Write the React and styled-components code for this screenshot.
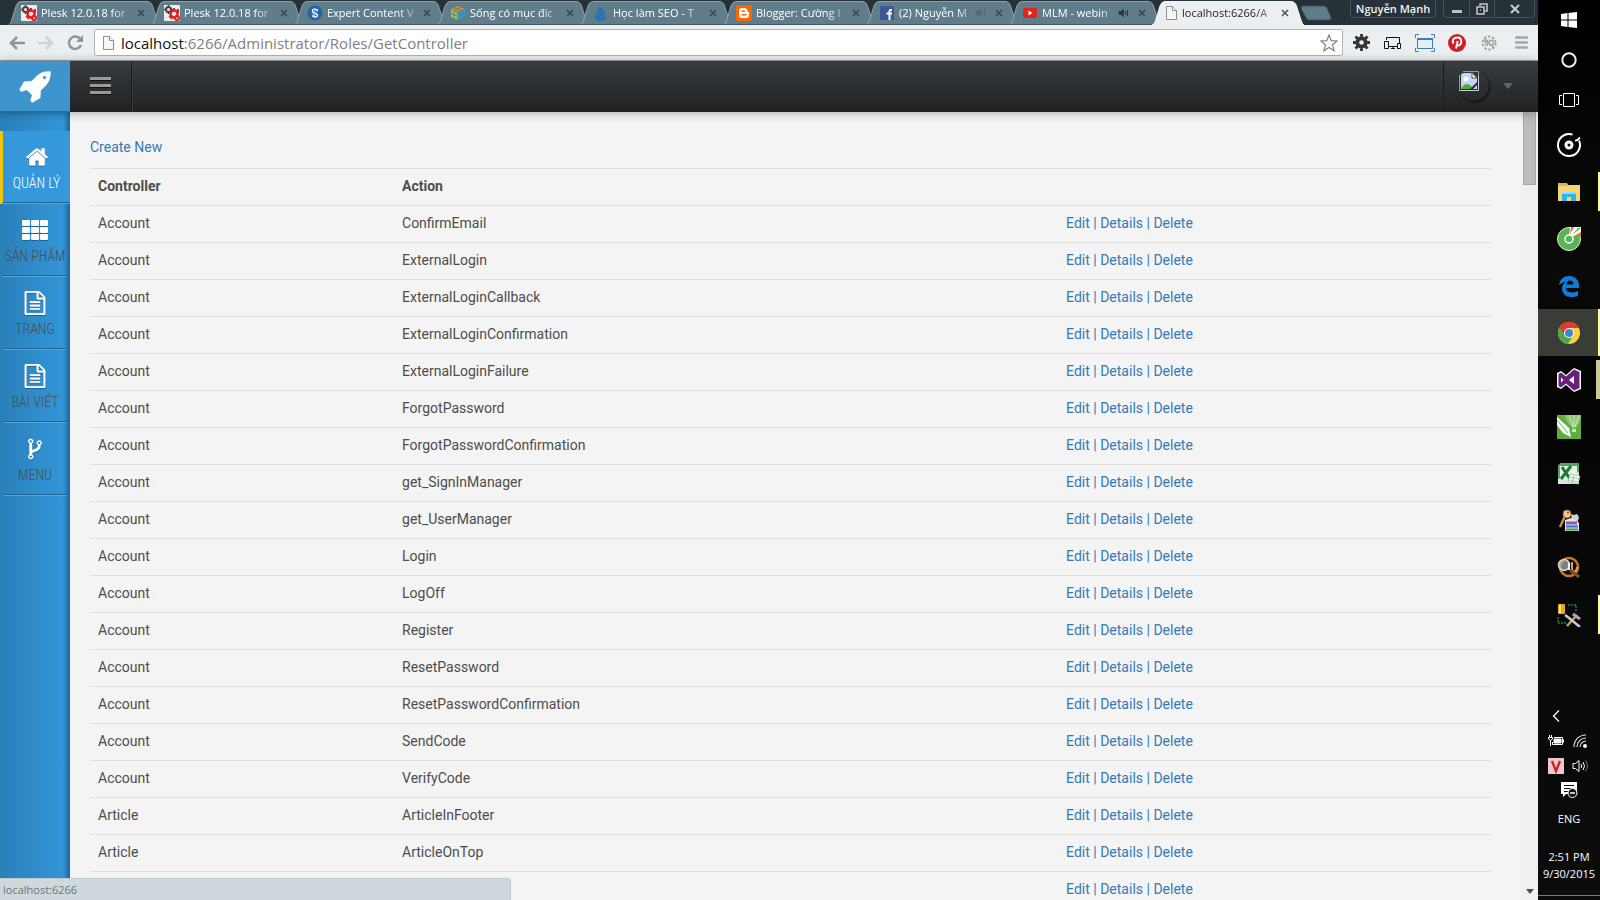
import React from 'react';
import styled, { createGlobalStyle, css } from 'styled-components';

const colors = {
    frame: '#263238',
    tab: '#607d8b',
    toolbar: '#eceff1',
    link: '#337ab7',
    text: '#4d4d4d',
    line: '#dddddd',
    page: '#f4f4f4',
};

const GlobalStyle = createGlobalStyle`
    * { box-sizing: border-box; }
    body {
        margin: 0;
        overflow: hidden;
        font-family: Roboto, "Liberation Sans", sans-serif;
        font-size: 14px;
        line-height: 20px;
        color: ${colors.text};
    }
    button {
        padding: 0;
        border: 0;
        background: none;
        font: inherit;
        color: inherit;
    }
    a { color: ${colors.link}; text-decoration: none; }
    ul { list-style: none; margin: 0; padding: 0; }
    svg { display: block; flex: none; }
`;

const uiFont = css`font-family: "Open Sans", "Noto Sans", sans-serif;`;

const Desktop = styled.div`
    display: flex;
    height: 100vh;
    background: #000;
`;

const Browser = styled.div`
    position: relative;
    flex: 1;
    min-width: 0;
    display: flex;
    flex-direction: column;
`;

/* ---- tab strip ---- */

const TabStrip = styled.div`
    ${uiFont}
    display: flex;
    height: 25px;
    flex: none;
    padding: 0 3px 0 8px;
    background: ${colors.frame};
    font-size: 11px;
    line-height: 24px;
`;

const Tabs = styled.ul`
    display: flex;
`;

const Tab = styled.li`
    position: relative;
    display: flex;
    align-items: center;
    width: 143px;
    height: 25px;
    padding: 1px 2px 0 13px;
    gap: 4px;
    z-index: ${p => (p.$active ? 2 : 1)};
    color: ${p => (p.$active ? '#222' : '#fff')};
`;

const TabShape = styled.svg`
    position: absolute;
    left: 0;
    top: 0;
    z-index: -1;
`;

const TabTitle = styled.button`
    flex: 1;
    min-width: 0;
    white-space: nowrap;
    text-align: left;
    mask-image: linear-gradient(90deg, #000 80%, rgba(0, 0, 0, 0.3) 100%);
`;

const TabClose = styled.button`
    display: flex;
    justify-content: center;
    width: 16px;
    color: ${p => (p.$active ? '#555' : '#39474e')};
`;

const NewTab = styled.button`
    align-self: center;
    margin-left: 5px;
`;

const WindowControls = styled.div`
    display: flex;
    gap: 7px;
    margin-left: auto;
    color: #cfd6d9;
`;

const Profile = styled.button`
    width: 86px;
    height: 18px;
    border: 1px solid #455259;
    border-top: 0;
    border-radius: 0 0 4px 4px;
    line-height: 16px;
    font-weight: 600;
    color: #f2f2f2;
    white-space: nowrap;
`;

const ControlGroup = styled.div`
    display: flex;
    height: 18px;
    border: 1px solid #455259;
    border-top: 0;
    border-radius: 0 0 4px 4px;
`;

const Control = styled.button`
    display: flex;
    align-items: center;
    justify-content: center;
    width: ${p => (p.$wide ? 40 : 25)}px;

    & + & { border-left: 1px solid #455259; }
`;

/* ---- address bar ---- */

const Toolbar = styled.div`
    display: flex;
    align-items: center;
    height: 36px;
    flex: none;
    padding: 0 7px;
    background: ${colors.toolbar};
    border-bottom: 1px solid #9b9d9f;
`;

const NavButtons = styled.div`
    display: flex;
    gap: 9px;
    margin-right: 9px;
`;

const AddressBox = styled.label`
    flex: 1;
    display: flex;
    align-items: center;
    height: 27px;
    padding: 0 4px 0 7px;
    gap: 6px;
    background: #fff;
    border: 1px solid #b0b4b6;
    border-radius: 2px;
`;

const Url = styled.div`
    ${uiFont}
    position: relative;
    flex: 1;
    height: 24px;
    font-size: 15px;
    line-height: 24px;
    color: #111;
`;

const UrlInput = styled.input`
    width: 100%;
    height: 24px;
    padding: 0;
    border: 0;
    outline: 0;
    background: none;
    font: inherit;
    color: #808080;
`;

/* the host part is painted darker than the rest of the address */
const UrlHost = styled.span`
    position: absolute;
    left: 0;
    top: 0;
    background: #fff;
    pointer-events: none;
`;

const Extensions = styled.div`
    display: flex;
    align-items: center;
    gap: 12px;
    margin-left: 8px;
`;

const ToolButton = styled.button`
    display: flex;
    align-items: center;
    justify-content: center;
    width: 20px;
    height: 20px;
`;

/* ---- web page ---- */

const Page = styled.div`
    flex: 1;
    min-height: 0;
    display: flex;
    flex-direction: column;
    background: ${colors.page};
`;

const Header = styled.header`
    position: relative;
    z-index: 3;
    display: flex;
    flex: none;
    height: 51px;
    background: linear-gradient(#393d40, #202122);
    box-shadow: 0 1px 10px rgba(0, 0, 0, 0.3);
`;

const Logo = styled.a`
    display: flex;
    align-items: center;
    justify-content: center;
    width: 70px;
    padding-left: 2px;
    background: #3e95cd;
    border-bottom: 1px solid #2a6b96;
    color: #fff;
`;

const MenuToggle = styled.button`
    display: flex;
    align-items: center;
    justify-content: center;
    width: 62px;
    padding-bottom: 2px;
    border-right: 1px solid #17191a;
    box-shadow: 1px 0 0 #3a3d3f;
`;

const UserMenu = styled.button`
    display: flex;
    align-items: center;
    gap: 14px;
    width: 95px;
    margin-left: auto;
    padding: 0 0 2px 15px;
    border-left: 1px solid #191b1c;
`;

const Avatar = styled.span`
    width: 30px;
    height: 30px;
    border-radius: 50%;
    box-shadow: 1px 1px 2px #0c0d0e;
`;

const Body = styled.div`
    flex: 1;
    min-height: 0;
    display: flex;
`;

const Sidebar = styled.nav`
    width: 70px;
    flex: none;
    padding-top: 19px;
    background: linear-gradient(90deg, #2980b9, #3498db);
    box-shadow: inset -5px 0 5px -2px rgba(0, 40, 80, 0.5);
`;

const MenuItem = styled.a`
    display: flex;
    flex-direction: column;
    align-items: center;
    gap: 2px;
    height: 73px;
    margin: ${p => (p.$active ? '0' : '0 3px')};
    padding-top: 14px;
    border-bottom: 1px solid #5ba6d6;
    box-shadow: inset 0 -1px 0 #1e6391;
    font-family: "Roboto Condensed", Roboto, sans-serif;
    font-weight: 300;
    font-size: 14px;
    line-height: 24px;
    white-space: nowrap;
    color: #4d4d4d;

    svg { color: #fff; filter: drop-shadow(0 1px 0 #1e6391); }

    ${p => p.$active && css`
        background: #3498db;
        border-left: 3px solid #f1c40f;
        color: #fff;
    `}
`;

const Content = styled.main`
    flex: 1;
    min-width: 0;
    overflow: hidden;
    padding: 25px 30px 0 20px;
`;

const Intro = styled.p`
    margin: 0 0 11px;
`;

const Table = styled.table`
    width: 100%;
    border-collapse: collapse;
    table-layout: fixed;

    th, td {
        height: 37px;
        padding: 7px 8px 8px;
        border-top: 1px solid ${colors.line};
        text-align: left;
        vertical-align: top;
        line-height: 20px;
    }
    th:nth-child(1) { width: 21.7%; }
    th:nth-child(2) { width: 47.4%; }
`;

const Actions = styled.td`
    color: ${colors.link};
`;

const ScrollTrack = styled.div`
    width: 17px;
    flex: none;
    display: flex;
    flex-direction: column;
    justify-content: space-between;
    align-items: center;
    padding-bottom: 6px;
    background: #f0f0f0;
`;

const ScrollThumb = styled.div`
    width: 13px;
    height: 73px;
    background: #bcbcbc;
    border: 1px solid #a8a8a8;
    border-top: 0;
`;

const StatusBubble = styled.div`
    ${uiFont}
    position: absolute;
    left: 0;
    bottom: 0;
    z-index: 5;
    width: 511px;
    height: 22px;
    padding-left: 3px;
    background: #cfd8dc;
    border-top: 1px solid #c2cacd;
    border-right: 1px solid #c2cacd;
    border-radius: 0 4px 0 0;
    font-size: 11px;
    line-height: 22px;
    color: #6d7478;
`;

/* ---- taskbar ---- */

const Taskbar = styled.aside`
    ${uiFont}
    display: flex;
    flex-direction: column;
    width: 62px;
    flex: none;
    background: linear-gradient(#000, #0a0a08 30%, #040404 40%, #0c0c0c);
    color: #fff;
    font-size: 11px;
    line-height: 17px;
`;

const StartButton = styled.button`
    display: flex;
    align-items: center;
    justify-content: center;
    height: 40px;
`;

const Pinned = styled.div`
    display: flex;
    flex-direction: column;
    margin-top: 1px;
`;

const TaskButton = styled.button`
    position: relative;
    display: flex;
    align-items: center;
    justify-content: center;
    height: 47px;
    background: ${p => (p.$current ? '#3b3b37' : 'none')};

    &::after {
        content: '';
        display: ${p => (p.$open ? 'block' : 'none')};
        position: absolute;
        right: 0;
        top: ${p => (p.$current ? 0 : 4)}px;
        bottom: ${p => (p.$current ? 0 : 4)}px;
        width: ${p => (p.$stacked ? 4 : 2)}px;
        background: ${p => (p.$stacked ? '#c9cb92' : '#fbfb9e')};
    }
`;

const Tray = styled.div`
    display: flex;
    flex-direction: column;
    align-items: center;
    margin-top: auto;
    border-bottom: 1px solid #7a7a7a;
    margin-bottom: 4px;
`;

const TrayGrid = styled.div`
    display: grid;
    grid-template-columns: 24px 24px;
    grid-auto-rows: 25px;
    place-items: center;
    width: 50px;
`;

const TrayButton = styled.button`
    display: flex;
    align-items: center;
    justify-content: center;
    height: ${p => p.$height || 24}px;
`;

const Clock = styled.div`
    margin: 14px 0 13px;
    text-align: center;
    white-space: nowrap;
`;

/* ---- icons ---- */

const glyphs = {
    home: 'M1472 992v480q0 26-19 45t-45 19h-384v-384h-256v384h-384q-26 0-45-19t-19-45v-480q0-1 .5-3t.5-3l575-474 575 474q1 2 1 6zm223-69l-62 74q-8 9-21 11h-3q-13 0-21-7l-692-577-692 577q-12 8-24 7-13-2-21-11l-62-74q-8-10-7-23.5t11-21.5l719-599q32-26 76-26t76 26l244 204v-195q0-14 9-23t23-9h192q14 0 23 9t9 23v408l219 182q10 8 11 21.5t-7 23.5z',
    file: 'M1596 380q28 28 48 76t20 88v1152q0 40-28 68t-68 28h-1344q-40 0-68-28t-28-68v-1600q0-40 28-68t68-28h896q40 0 88 20t76 48zm-444-244v376h376q-10-29-22-41l-313-313q-12-12-41-22zm384 1528v-1024h-416q-40 0-68-28t-28-68v-416h-768v1536h1280zm-1024-864q0-14 9-23t23-9h704q14 0 23 9t9 23v64q0 14-9 23t-23 9h-704q-14 0-23-9t-9-23v-64zm736 224q14 0 23 9t9 23v64q0 14-9 23t-23 9h-704q-14 0-23-9t-9-23v-64q0-14 9-23t23-9h704zm0 256q14 0 23 9t9 23v64q0 14-9 23t-23 9h-704q-14 0-23-9t-9-23v-64q0-14 9-23t23-9h704z',
    fork: 'M672 1472q0-40-28-68t-68-28-68 28-28 68 28 68 68 28 68-28 28-68zm0-1152q0-40-28-68t-68-28-68 28-28 68 28 68 68 28 68-28 28-68zm640 128q0-40-28-68t-68-28-68 28-28 68 28 68 68 28 68-28 28-68zm96 0q0 52-26 96.5t-70 69.5q-2 287-226 414-67 38-203 81-128 40-169.5 71t-41.5 100v26q44 25 70 69.5t26 96.5q0 80-56 136t-136 56-136-56-56-136q0-52 26-96.5t70-69.5v-820q-44-25-70-69.5t-26-96.5q0-80 56-136t136-56 136 56 56 136q0 52-26 96.5t-70 69.5v497q54-26 154-57 55-17 87.5-29.5t70.5-31 59-39.5 40.5-51 28-69.5 8.5-91.5q-44-25-70-69.5t-26-96.5q0-80 56-136t136-56 136 56 56 136z',
    rocket: 'M1440 448q0-40-28-68t-68-28-68 28-28 68 28 68 68 28 68-28 28-68zm224-288q0 249-75.5 430.5t-253.5 360.5q-81 80-195 176l-20 379q-2 16-16 26l-384 224q-7 4-16 4-12 0-23-9l-64-64q-13-14-8-32l85-276-281-281-276 85q-3 1-9 1-14 0-23-9l-64-64q-17-19-5-39l224-384q10-14 26-16l379-20q96-114 176-195 188-187 358-258t431-71q14 0 24 9.5t10 22.5z',
};

const Glyph = ({ name, size = 24 }) => (
    <svg width={size} height={size} viewBox="0 0 1792 1792" fill="currentColor" stroke="currentColor" strokeWidth="24">
        <path d={glyphs[name]} />
    </svg>
);

const GridIcon = () => (
    <svg width="26" height="24" viewBox="0 0 26 24" fill="currentColor">
        {[2, 9, 16].map(y => [0, 9, 18].map(x => (
            <rect key={`${x}-${y}`} x={x} y={y} width="8" height="6" rx="1" />
        )))}
    </svg>
);

const PageIcon = () => (
    <svg width="13" height="16" viewBox="0 0 13 16" fill="#f6f6f6" stroke="#8e8e8e">
        <path d="M1.5 1.5h6l4 4v9h-10z" />
        <path d="M7.5 1.5v4h4" />
    </svg>
);

const CloseIcon = () => (
    <svg width="8" height="8" viewBox="0 0 8 8" stroke="currentColor" strokeWidth="1.6">
        <path d="M1 1l6 6M7 1L1 7" />
    </svg>
);

const SpeakerIcon = ({ on }) => (
    <svg width="12" height="12" viewBox="0 0 12 12" fill={on ? '#333' : '#4f6975'} stroke={on ? '#333' : '#4f6975'}>
        <path d="M1 4.500h2l2.500-2.500v8L3 7.500H1z" strokeWidth=".6" />
        <path d="M7.500 4v4M9.500 3v6" fill="none" />
    </svg>
);

const Favicon = ({ kind }) => {
    if (kind === 'page') return <PageIcon />;
    return (
        <svg width="16" height="16" viewBox="0 0 16 16">
            {kind === 'plesk' && <>
                <rect width="16" height="16" rx="1" fill="#ececec" />
                <circle cx="4.500" cy="4.500" r="2.500" fill="none" stroke="#444" strokeWidth="2" />
                <path d="M4.500 0v2M4.500 7v2M0 4.500h2M7 4.500h2" stroke="#444" strokeWidth="1.500" />
                <circle cx="10" cy="9" r="3.500" fill="none" stroke="#e01f27" strokeWidth="2.500" />
                <path d="M10 3v3M5 7l2 1M5 12l3-1M14 4v4M7 14l2-3" stroke="#e01f27" strokeWidth="2" />
                <circle cx="13" cy="13" r="2" fill="none" stroke="#e01f27" strokeWidth="2" />
            </>}
            {kind === 'expert' && <>
                <circle cx="8" cy="8" r="7.500" fill="#2464a4" />
                <path d="M11 5.500C9 3 5 4 5.500 6.500S11 8 10.500 10.500 6 12 5 10.500" fill="none" stroke="#fff" strokeWidth="1.300" />
                <path d="M10.500 6.500C9 5 7 5.500 8 7M5.500 9.500C7 11 9 10.500 8 9" fill="none" stroke="#fff" strokeWidth=".8" />
            </>}
            {kind === 'cube' && <>
                <path d="M1 4.500l6-3.500 7.500 2.500L8 7z" fill="#f08a24" />
                <path d="M1 5l6.500 3v7L1 12z" fill="#a6c93a" />
                <path d="M8.500 8L15 4.500V11l-6.500 4z" fill="#2a9fd8" />
                <path d="M4 3l7 2.500M1 8.500l6.500 3M8.500 11.500L15 8M4 6.500v7M12 6v7M11 2L4 6" stroke="#607d8b" />
            </>}
            {kind === 'drop' && <>
                <path d="M6.500 0C8 3 13 7 13 11c0 3-2 5-5 5s-6-1-6-4.500C2 8 7 5 6.500 0z" fill="#1c75bc" />
                <path d="M3 10c3-.5 5-2 6-4M4 13c3-.3 6-1 8-4" fill="none" stroke="#607d8b" />
            </>}
            {kind === 'blogger' && <>
                <rect width="16" height="16" rx="3" fill="#ff6600" />
                <path d="M6 3h2.500C10.500 3 11.500 4.500 11.500 6.500c.2.700 1.500.2 1.500 1v2.500c0 2-1 3-3 3H6c-2 0-3-1-3-3V6c0-2 1-3 3-3z" fill="#fff" />
                <path d="M6 6.300h2.500M6 9.800h4" stroke="#ff6600" strokeWidth="1.400" strokeLinecap="round" />
            </>}
            {kind === 'facebook' && <>
                <rect x="1" y="1" width="14" height="14" fill="#3b5998" />
                <path d="M13 5h-1.500q-1 0-1 1v9M7.500 8.500H13" fill="none" stroke="#fff" strokeWidth="2" />
            </>}
            {kind === 'youtube' && <>
                <rect x="1" y="3" width="14" height="10" rx="2.500" fill="#e62117" />
                <path d="M6.500 5.500v5l4-2.500z" fill="#fff" />
            </>}
        </svg>
    );
};

const TabOutline = ({ active }) => (
    <TabShape width="152" height="25" viewBox="0 0 152 25">
        <path
            d="M0 25C3 24 3 22 4 19L8 6Q9.500 1.500 13 1.500H139Q143 1.500 144.500 6L149 20Q150 24 152 25z"
            fill={active ? colors.toolbar : colors.tab}
        />
        <path
            d="M0 25C3 24 3 22 4 19L8 6Q9.500 1.500 13 1.500H139Q143 1.500 144.500 6L149 20Q150 24 152 25"
            fill="none"
            stroke={active ? '#f4f6f7' : '#8fa3ad'}
        />
        {!active && <path d="M0 24.500h152" stroke="#45555e" />}
    </TabShape>
);

const taskIcons = {
    groove: <>
        <path d="M15.500 1.600A11 11 0 1 0 22 7.500" fill="none" stroke="#fff" strokeWidth="2" />
        <circle cx="12" cy="12" r="3" fill="none" stroke="#fff" strokeWidth="3" />
        <path d="M18 7.500c2 .5 3-1 5-3" fill="none" stroke="#fff" strokeWidth="2" />
    </>,
    folder: <>
        <path d="M1 3h9l1 2h12v16H1z" fill="#f7d672" />
        <path d="M1 3h9v3H1z" fill="#e9b73c" />
        <path d="M3 4h4" stroke="#59c3ea" />
        <path d="M5 21v-8h14v8h-5v-4h-4v4z" fill="#2fb4ea" />
        <path d="M5 13h14" stroke="#8fdcf5" strokeWidth="2" />
    </>,
    coccoc: <>
        <circle cx="12" cy="12" r="11.500" fill="#5cb353" stroke="#d8efd5" />
        <path d="M12 10L13 0H24V8z" fill="#fff" />
        <path d="M13 7l1-7h3zM17 9l7-4v4z" fill="#f26a21" />
        <path d="M15 8l6-7h3z" fill="#5cb353" />
        <circle cx="12" cy="12" r="4" fill="#5cb353" stroke="#fff" strokeWidth="1.500" />
    </>,
    edge: <path d="M2 11C3 5 7 2 12 2c6 0 10 4 10 9v3H9c0 3 3 4.500 6 4.500 2 0 4-.5 6-1.500v4.500c-2 1-4 1.500-7 1.500-6 0-9-4-9-8 0-3.500 1.500-6 4-7.500-3 .5-5 2-7 3.500zM9.500 10.500h7C16.500 8 15 6.500 13 6.500s-3.300 1.500-3.500 4z" fill="#0f7bdc" />,
    chrome: <>
        <circle cx="12" cy="12" r="11" fill="#f9d23c" />
        <path d="M12 12L2.500 6.500A11 11 0 0 0 11 23l5-9z" fill="#4aa847" />
        <path d="M12 7h10A11 11 0 0 0 2.500 6.500L7.500 14z" fill="#dd3b30" />
        <circle cx="12" cy="12" r="5" fill="#fff" />
        <circle cx="12" cy="12" r="4" fill="#3f83d8" />
    </>,
    studio: <>
        <path d="M17 0l7 3v18l-7 3-8-7-5 4-4-2V5l4-2 5 4z" fill="#fff" />
        <path d="M17 1.500l5.500 2.500v16L17 22.500 9 15.500 4 19.500 1.500 18V6L4 4.500l5 4zM17 8l-5 4 5 4zM4 9.500v5L6.500 12z" fill="#68217a" fillRule="evenodd" />
    </>,
    corel: <>
        <rect width="24" height="24" fill="#5fad41" />
        <path d="M8 0c0 6 5 9 7 13h4c2-4 5-6 5-13z" fill="#8bc777" />
        <path d="M12 0l4 12M17 0v12M22 0l-4 12" stroke="#c9e5be" />
        <path d="M15 14h4v3h-4z" fill="#c9e5be" />
        <path d="M0 2l12 11 2 9-8-4-6-8z" fill="#fff" />
        <path d="M0 5l11 13" stroke="#5fad41" />
    </>,
    excel: <>
        <path d="M4 1h18v21H1V4z" fill="#d9ead8" />
        <path d="M1 4l4-3h17v9L1 17z" fill="#5ba360" />
        <path d="M3 4h17v13H3z" fill="#e7f3e6" />
        <path d="M5 5l8 12M14 4L4 17" stroke="#1f7a38" strokeWidth="3" />
        <path d="M13 12l10 2-2 8-10-2z" fill="#f7fbf7" stroke="#8fbc91" strokeWidth=".7" />
        <path d="M13 15l9 2M12 18l9 2M17 13l-2 8" stroke="#8fbc91" strokeWidth=".8" />
    </>,
    key: <>
        <path d="M8 11l9-3 5 6v8H8z" fill="#dfe2f5" />
        <path d="M14 5l3 1 3-1 2 3-1 4-6-2z" fill="#cfd3dc" />
        <path d="M9 14h11" stroke="#a0559d" strokeWidth="3" />
        <path d="M9 17.500h12" stroke="#2b6fd0" strokeWidth="2" />
        <path d="M9 20.500h12" stroke="#44a037" strokeWidth="2" />
        <path d="M8 7L3 18" stroke="#c7913f" strokeWidth="2.500" />
        <circle cx="10" cy="5" r="4" fill="#edc78c" stroke="#a96f2a" />
        <circle cx="11" cy="3.500" r="1" fill="#7b4c18" />
    </>,
    search: <>
        <circle cx="12" cy="11" r="9" fill="none" stroke="#c9762a" strokeWidth="2.500" />
        <path d="M15 6v8c2 3 5 1 5-3" fill="none" stroke="#e0a050" strokeWidth="2" />
        <circle cx="7" cy="9" r="5.500" fill="#b8b5b0" fillOpacity=".7" stroke="#d6d3ce" strokeWidth="1.500" />
        <path d="M12 7v7" stroke="#f0eee8" strokeWidth="2" />
        <path d="M13 14l9 7" stroke="#7d5230" strokeWidth="3" />
    </>,
    tools: <>
        <rect x="1" y="1" width="7" height="10" rx="1" fill="#e6a820" />
        <path d="M3 2v8" stroke="#ffe38a" strokeWidth="2" />
        <path d="M11 2h8v7M1 14v6h8" fill="none" stroke="#2f7d32" strokeWidth="1.500" strokeDasharray="2 1" />
        <path d="M10 23L20 12" stroke="#d79b3c" strokeWidth="2.500" />
        <path d="M8 12l4 3 11 9" fill="none" stroke="#c4ccd6" strokeWidth="2.500" />
        <path d="M16 11l4 3 3 2" fill="none" stroke="#9fabb8" strokeWidth="3" />
    </>,
};

/* ---- data ---- */

const tabs = [
    { title: 'Plesk 12.0.18 for', icon: 'plesk' },
    { title: 'Plesk 12.0.18 for', icon: 'plesk' },
    { title: 'Expert Content V', icon: 'expert' },
    { title: 'Sống có mục đíc', icon: 'cube' },
    { title: 'Học làm SEO - T', icon: 'drop' },
    { title: 'Blogger: Cường I', icon: 'blogger' },
    { title: '(2) Nguyễn M', icon: 'facebook', audio: 'off' },
    { title: 'MLM - webin', icon: 'youtube', audio: 'on' },
    { title: 'localhost:6266/A', icon: 'page', active: true },
];

const menu = [
    { label: 'QUẢN LÝ', icon: <Glyph name="home" />, active: true },
    { label: 'SẢN PHẨM', icon: <GridIcon /> },
    { label: 'TRANG', icon: <Glyph name="file" /> },
    { label: 'BÀI VIẾT', icon: <Glyph name="file" /> },
    { label: 'MENU', icon: <Glyph name="fork" /> },
];

const rows = [
    ['Account', 'ConfirmEmail'],
    ['Account', 'ExternalLogin'],
    ['Account', 'ExternalLoginCallback'],
    ['Account', 'ExternalLoginConfirmation'],
    ['Account', 'ExternalLoginFailure'],
    ['Account', 'ForgotPassword'],
    ['Account', 'ForgotPasswordConfirmation'],
    ['Account', 'get_SignInManager'],
    ['Account', 'get_UserManager'],
    ['Account', 'Login'],
    ['Account', 'LogOff'],
    ['Account', 'Register'],
    ['Account', 'ResetPassword'],
    ['Account', 'ResetPasswordConfirmation'],
    ['Account', 'SendCode'],
    ['Account', 'VerifyCode'],
    ['Article', 'ArticleInFooter'],
    ['Article', 'ArticleOnTop'],
    ['', ''],
];

const tasks = [
    { icon: 'groove' },
    { icon: 'folder', open: true },
    { icon: 'coccoc' },
    { icon: 'edge' },
    { icon: 'chrome', open: true, current: true },
    { icon: 'studio', open: true, stacked: true },
    { icon: 'corel' },
    { icon: 'excel' },
    { icon: 'key' },
    { icon: 'search' },
    { icon: 'tools', open: true },
];

/* ---- sections ---- */

const TitleBar = () => (
    <TabStrip>
        <Tabs>
            {tabs.map((tab, i) => (
                <Tab key={i} $active={tab.active}>
                    <TabOutline active={tab.active} />
                    <Favicon kind={tab.icon} />
                    <TabTitle>{tab.title}</TabTitle>
                    {tab.audio && <SpeakerIcon on={tab.audio === 'on'} />}
                    <TabClose $active={tab.active} aria-label="Close tab"><CloseIcon /></TabClose>
                </Tab>
            ))}
        </Tabs>
        <NewTab aria-label="New tab">
            <svg width="32" height="16" viewBox="0 0 32 16">
                <path d="M3 1h21q2 0 3 2l4 9q1 3-2 3H9q-2 0-3-2L1 3q0-2 2-2z" fill={colors.tab} stroke="#3c4c54" />
            </svg>
        </NewTab>
        <WindowControls>
            <Profile>Nguyễn Mạnh</Profile>
            <ControlGroup>
                <Control aria-label="Minimize">
                    <svg width="12" height="12" viewBox="0 0 12 12"><path d="M1 8.500h10" stroke="#b9c1c5" strokeWidth="3" /></svg>
                </Control>
                <Control aria-label="Restore">
                    <svg width="12" height="12" viewBox="0 0 12 12" fill="none" stroke="#c3cace" strokeWidth="1.500">
                        <path d="M4 3V1h7v7H9M1 4h7v7H1zM4 7h1" />
                    </svg>
                </Control>
                <Control $wide aria-label="Close">
                    <svg width="12" height="12" viewBox="0 0 12 12"><path d="M2 2l8 8M10 2l-8 8" stroke="#c3cace" strokeWidth="2.200" /></svg>
                </Control>
            </ControlGroup>
        </WindowControls>
    </TabStrip>
);

const AddressBar = () => (
    <Toolbar>
        <NavButtons>
            <ToolButton aria-label="Back">
                <svg width="18" height="16" viewBox="0 0 18 16" fill="none" stroke="#949494" strokeWidth="2.600"><path d="M9 2L3 8l6 6M3 8h14" /></svg>
            </ToolButton>
            <ToolButton aria-label="Forward">
                <svg width="18" height="16" viewBox="0 0 18 16" fill="none" stroke="#d0d2d3" strokeWidth="2.600"><path d="M9 2l6 6-6 6M15 8H1" /></svg>
            </ToolButton>
            <ToolButton aria-label="Reload">
                <svg width="16" height="16" viewBox="0 0 16 16" fill="none" stroke="#949494" strokeWidth="2.500">
                    <path d="M13.500 4.500A6.200 6.200 0 1 0 14 10" />
                    <path d="M16 0v7H9z" fill="#949494" stroke="none" />
                </svg>
            </ToolButton>
        </NavButtons>
        <AddressBox>
            <PageIcon />
            <Url>
                <UrlInput aria-label="Address" defaultValue="localhost:6266/Administrator/Roles/GetController" />
                <UrlHost aria-hidden="true">localhost</UrlHost>
            </Url>
            <svg width="18" height="18" viewBox="0 0 18 18" fill="#fff" stroke="#808080" strokeWidth="1.200">
                <path d="M9 1l2.200 5.700 6 .3-4.700 3.800 1.600 6L9 13.500l-5.100 3.300 1.600-6L.8 7l6-.3z" />
            </svg>
        </AddressBox>
        <Extensions>
            <ToolButton aria-label="Settings">
                <svg width="17" height="17" viewBox="0 0 18 18" stroke="#333">
                    <circle cx="9" cy="9" r="4.500" fill="none" strokeWidth="4" />
                    <path d="M9 0v3M9 15v3M0 9h3M15 9h3M2.600 2.600l2.200 2.200M13.200 13.200l2.200 2.200M15.400 2.600l-2.200 2.200M4.800 13.200l-2.200 2.200" strokeWidth="3" />
                </svg>
            </ToolButton>
            <ToolButton aria-label="Devices">
                <svg width="18" height="14" viewBox="0 0 18 14" fill="none" stroke="#111">
                    <path d="M2.500 4V1.500h13V7M5 10.500h8M.5 5.500h4v7h-4zM13.500 7.500h3v5h-3zM7 12.500h4M9 10.500v2" />
                </svg>
            </ToolButton>
            <ToolButton aria-label="Resize">
                <svg width="20" height="18" viewBox="0 0 20 18" fill="none" stroke="#3b7fb8">
                    <path d="M.5 4V.5H4M16 .5h3.500V4M.5 14v3.500H4M16 17.500h3.500V14" />
                    <rect x="2.500" y="4.500" width="15" height="10" fill="#e4eef6" />
                    <path d="M2 5h16" strokeWidth="2" />
                </svg>
            </ToolButton>
            <ToolButton aria-label="Pin it">
                <svg width="18" height="18" viewBox="0 0 18 18">
                    <circle cx="9" cy="9" r="9" fill="#cb2027" />
                    <path d="M8 14.500L9.700 7M5.500 9.500C3.500 6 6 3.500 9.500 3.500c5 0 4.700 8 .8 8-1 0-1.500-.5-1.600-1" fill="none" stroke="#fff" strokeWidth="1.900" />
                </svg>
            </ToolButton>
            <ToolButton aria-label="SEO">
                <svg width="16" height="16" viewBox="0 0 16 16" fill="none" stroke="#a5a5a0">
                    <circle cx="8" cy="8" r="6.500" strokeWidth="2" strokeDasharray="2.500 1.600" />
                    <path d="M7 5.500H4v2h2.500v2.500H4M8.500 5.500H12V10H8.500zM3 3l10 10" strokeWidth="1.300" />
                </svg>
            </ToolButton>
            <ToolButton aria-label="Menu">
                <svg width="13" height="13" viewBox="0 0 13 13" stroke="#a3a5a6" strokeWidth="2.500" strokeLinecap="round"><path d="M1 1.500h11M1 6.500h11M1 11.500h11" /></svg>
            </ToolButton>
        </Extensions>
    </Toolbar>
);

const RoleTable = () => (
    <Table>
        <thead>
            <tr><th>Controller</th><th>Action</th><th aria-label="Links" /></tr>
        </thead>
        <tbody>
            {rows.map(([controller, action], i) => (
                <tr key={i}>
                    <td>{controller}</td>
                    <td>{action}</td>
                    <Actions>
                        <a href="#edit">Edit</a> | <a href="#details">Details</a> | <a href="#delete">Delete</a>
                    </Actions>
                </tr>
            ))}
        </tbody>
    </Table>
);

const SystemBar = () => (
    <Taskbar>
        <StartButton aria-label="Start">
            <svg width="16" height="16" viewBox="0 0 16 16" fill="#fff"><path d="M0 2l6.500-1v6.500H0zM7.500 1L16 0v7.500H7.500zM0 8.500h6.500V15L0 14zM7.500 8.500H16V16l-8.500-1z" /></svg>
        </StartButton>
        <StartButton aria-label="Search">
            <svg width="16" height="16" viewBox="0 0 16 16"><circle cx="8" cy="8" r="6.700" fill="none" stroke="#eee" strokeWidth="2" /></svg>
        </StartButton>
        <StartButton aria-label="Task view">
            <svg width="20" height="14" viewBox="0 0 20 14" fill="none" stroke="#fff"><path d="M4.500.5h11v13h-11zM3 2.500H.5v9H3M17 2.500h2.500v9H17" /></svg>
        </StartButton>
        <Pinned>
            {tasks.map(task => (
                <TaskButton
                    key={task.icon}
                    aria-label={task.icon}
                    $open={task.open}
                    $current={task.current}
                    $stacked={task.stacked}>
                    <svg width="24" height="24" viewBox="0 0 24 24">{taskIcons[task.icon]}</svg>
                </TaskButton>
            ))}
        </Pinned>
        <Tray>
            <TrayGrid>
                <TrayButton aria-label="Show hidden icons">
                    <svg width="8" height="12" viewBox="0 0 8 12" fill="none" stroke="#fff" strokeWidth="1.300"><path d="M7 .5L1.500 6 7 11.500" /></svg>
                </TrayButton>
                <span />
                <TrayButton aria-label="Battery">
                    <svg width="16" height="12" viewBox="0 0 16 12" fill="none" stroke="#fff">
                        <path d="M6 2.500h8.500v7h-10V7M1.500 0v2M3.500 0v2M.5 2.500h4V4l-2 1.500L.5 4zM2.500 5v6" />
                        <path d="M6 4h7v4H6z" fill="#fff" /><path d="M15.500 4.500v3" />
                    </svg>
                </TrayButton>
                <TrayButton aria-label="Network">
                    <svg width="14" height="14" viewBox="0 0 14 14" fill="none" stroke="#ddd" strokeWidth="1.200">
                        <path d="M1 13C1 6 6 1 13 1M4 13c0-5 4-9 9-9M7 13c0-3.500 3-6 6-6" />
                        <circle cx="12" cy="12" r="2" fill="#fff" stroke="none" />
                    </svg>
                </TrayButton>
                <TrayButton aria-label="Unikey">
                    <svg width="16" height="16" viewBox="0 0 16 16"><rect width="16" height="16" fill="#f0c9c6" /><path d="M4 3l4 10 4-10" fill="none" stroke="#c1272d" strokeWidth="2.400" /></svg>
                </TrayButton>
                <TrayButton aria-label="Volume">
                    <svg width="17" height="14" viewBox="0 0 17 14" fill="none" stroke="#fff">
                        <path d="M1 4.500h2.500L7 1.500v11l-3.500-3H1zM9 5q1.500 2 0 4M11 3q3 4 0 8" /><path d="M13.500 1.500q4 5.500 0 11" stroke="#777" />
                    </svg>
                </TrayButton>
            </TrayGrid>
            <TrayButton aria-label="Notifications">
                <svg width="17" height="16" viewBox="0 0 17 16">
                    <path d="M0 0h16v12H5l-3 3v-3H0z" fill="#fff" />
                    <path d="M3 3.500h10M3 6.500h10M3 9.500h4" stroke="#111" />
                    <circle cx="11.500" cy="11" r="4.500" fill="#111" stroke="#fff" /><path d="M9 11h5" stroke="#fff" strokeWidth="1.500" />
                </svg>
            </TrayButton>
            <TrayButton $height={32}>ENG</TrayButton>
            <Clock>2:51 PM<br />9/30/2015</Clock>
        </Tray>
    </Taskbar>
);

export default function App() {
    return (
        <Desktop>
            <GlobalStyle />
            <Browser>
                <TitleBar />
                <AddressBar />
                <Page>
                    <Header>
                        <Logo href="#top" aria-label="Home"><Glyph name="rocket" size={34} /></Logo>
                        <MenuToggle aria-label="Toggle menu">
                            <svg width="21" height="18" viewBox="0 0 21 18"><path d="M0 3.500h21M0 10.500h21M0 17.500h21" stroke="#111" /><path d="M0 1.500h21M0 8.500h21M0 15.500h21" stroke="#999" strokeWidth="3" /></svg>
                        </MenuToggle>
                        <UserMenu aria-label="User menu">
                            <Avatar>
                                <svg width="20" height="20" viewBox="0 0 20 20">
                                    <path d="M4 .5h15.500v19H.5V4" fill="none" stroke="#999" />
                                    <path d="M2 5q0-3 3-3h8l5 5v11H2z" fill="#c3d6f5" />
                                    <circle cx="7" cy="8" r="2.500" fill="#fff" />
                                    <path d="M13 1.500v5.500h5z" fill="#fff" stroke="#555" />
                                    <path d="M2 18c2-5 6-6 9-4l4 4z" fill="#4caf3a" />
                                    <path d="M11 18l7-7v3l-4 4z" fill="#2b2d2f" />
                                    <path d="M19.500 5v14.500H.5" fill="none" stroke="#ccc" />
                                </svg>
                            </Avatar>
                            <svg width="10" height="6" viewBox="0 0 10 6"><path d="M0 0h10L5 6z" fill="#5d666b" /></svg>
                        </UserMenu>
                    </Header>
                    <Body>
                        <Sidebar>
                            {menu.map(item => (
                                <MenuItem key={item.label} href="#menu" $active={item.active}>
                                    {item.icon}
                                    <span>{item.label}</span>
                                </MenuItem>
                            ))}
                        </Sidebar>
                        <Content>
                            <Intro><a href="#create">Create New</a></Intro>
                            <RoleTable />
                        </Content>
                        <ScrollTrack>
                            <ScrollThumb />
                            <svg width="8" height="5" viewBox="0 0 8 5"><path d="M0 0h8L4 5z" fill="#505050" /></svg>
                        </ScrollTrack>
                    </Body>
                </Page>
                <StatusBubble>localhost:6266</StatusBubble>
            </Browser>
            <SystemBar />
        </Desktop>
    );
}
